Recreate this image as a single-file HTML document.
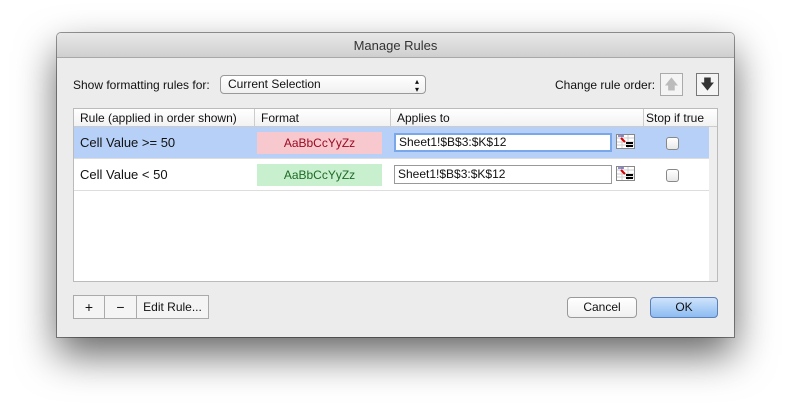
<!DOCTYPE html>
<html><head><style>
body{margin:0;width:791px;height:417px;background:#fff;position:relative;font-family:"Liberation Sans",sans-serif;font-size:12px;color:#111;overflow:hidden}
.a{position:absolute}
.win{left:57px;top:33px;width:677px;height:304px;background:#ececec;box-shadow:0 18px 40px rgba(0,0,0,.6),0 0 0 1px #999;border-radius:4px 4px 0 0}
.title{left:0;top:0;width:677px;height:24px;background:linear-gradient(#e8e8e8,#cfcfcf);border-bottom:1px solid #a8a8a8;border-radius:4px 4px 0 0;text-align:center;line-height:25px;font-size:13px;color:#333}
.btn{background:linear-gradient(#fff,#f0f0f0);border:1px solid #999;border-radius:4px;text-align:center;box-sizing:border-box}
.cell{top:0;height:18px;line-height:18px;border-right:1px solid #ccc;padding-left:6px;box-sizing:border-box}
.inp{background:#fff;border:1px solid #999;box-sizing:border-box;height:19px;line-height:17px;padding-left:3px;font-size:12px}
.chk{width:11px;height:11px;border:1px solid #888;border-radius:3px;background:linear-gradient(#fff,#e8e8e8)}
.sq{border:1px solid #aaa;background:#f4f4f4;box-sizing:border-box}
</style></head><body>
<div class="a win">
<div class="a title">Manage Rules</div>
<div class="a" style="left:16px;top:45px">Show formatting rules for:</div>
<div class="a btn" style="left:163px;top:42px;width:206px;height:19px;line-height:17px;text-align:left;padding-left:7px">Current Selection<span class="a" style="right:6px;top:0;font-size:8px;line-height:8px;top:2px">▴<br>▾</span></div>
<div class="a" style="left:498px;top:45px">Change rule order:</div>
<div class="a sq" style="left:603px;top:40px;width:23px;height:23px;color:#bbb;text-align:center;line-height:21px;font-size:14px">🡅</div>
<div class="a sq" style="left:639px;top:40px;width:23px;height:23px;border-color:#777;color:#333;text-align:center;line-height:21px;font-size:14px">🡇</div>
<div class="a" style="left:16px;top:75px;width:645px;height:174px;background:#fff;border:1px solid #bbb;box-sizing:border-box">
 <div class="a" style="left:0;top:0;width:643px;height:17px;background:linear-gradient(#fff,#f2f2f2);border-bottom:1px solid #ccc">
  <div class="a cell" style="left:0;width:181px">Rule (applied in order shown)</div>
  <div class="a cell" style="left:181px;width:136px">Format</div>
  <div class="a cell" style="left:317px;width:253px">Applies to</div>
  <div class="a cell" style="left:570px;width:73px;border:0;padding-left:2px">Stop if true</div>
 </div>
 <div class="a" style="left:635px;top:18px;width:8px;height:154px;background:#eee"></div>
 <div class="a" style="left:0;top:18px;width:635px;height:31px;background:#b7d0f8;border-bottom:1px solid #ddd"></div>
 <div class="a" style="left:0;top:50px;width:635px;height:31px;border-bottom:1px solid #ddd"></div>
 <div class="a" style="left:6px;top:26px;font-size:13px">Cell Value &gt;= 50</div>
 <div class="a" style="left:6px;top:58px;font-size:13px">Cell Value &lt; 50</div>
 <div class="a" style="left:183px;top:23px;width:125px;height:22px;background:#f7c8ce;color:#9c0a20;text-align:center;line-height:22px">AaBbCcYyZz</div>
 <div class="a" style="left:183px;top:55px;width:125px;height:22px;background:#c8efce;color:#1e6b25;text-align:center;line-height:22px">AaBbCcYyZz</div>
 <div class="a inp" style="left:320px;top:24px;width:218px;border:2px solid #7aa7e8;line-height:15px">Sheet1!$B$3:$K$12</div>
 <div class="a inp" style="left:320px;top:56px;width:218px">Sheet1!$B$3:$K$12</div>
 <svg class="a" style="left:542px;top:25px" width="19" height="15"><rect x=".5" y=".5" width="18" height="14" fill="#fff" stroke="#888"/><path d="M1 4h17M1 8h17M1 11h17M6 1v13M12 1v13" stroke="#ccc"/><path d="M2 2h6" stroke="#22a"/><path d="M5 4l4 4" stroke="#d00" stroke-width="2"/><path d="M10 9h7M10 12h7" stroke="#000" stroke-width="2"/></svg>
 <svg class="a" style="left:542px;top:57px" width="19" height="15"><rect x=".5" y=".5" width="18" height="14" fill="#fff" stroke="#888"/><path d="M1 4h17M1 8h17M1 11h17M6 1v13M12 1v13" stroke="#ccc"/><path d="M2 2h6" stroke="#22a"/><path d="M5 4l4 4" stroke="#d00" stroke-width="2"/><path d="M10 9h7M10 12h7" stroke="#000" stroke-width="2"/></svg>
 <div class="a chk" style="left:592px;top:28px"></div>
 <div class="a chk" style="left:592px;top:60px"></div>
</div>
<div class="a sq" style="left:16px;top:262px;width:32px;height:24px;text-align:center;line-height:22px;font-size:14px">+</div>
<div class="a sq" style="left:47px;top:262px;width:33px;height:24px;text-align:center;line-height:22px;font-size:14px">−</div>
<div class="a sq" style="left:79px;top:262px;width:73px;height:24px;text-align:center;line-height:22px">Edit Rule...</div>
<div class="a btn" style="left:510px;top:264px;width:70px;height:21px;line-height:19px">Cancel</div>
<div class="a btn" style="left:593px;top:264px;width:68px;height:21px;line-height:19px;background:linear-gradient(#cfe3fb,#8cbcf2);border-color:#5c7fb5">OK</div>
</div>
</body></html>
